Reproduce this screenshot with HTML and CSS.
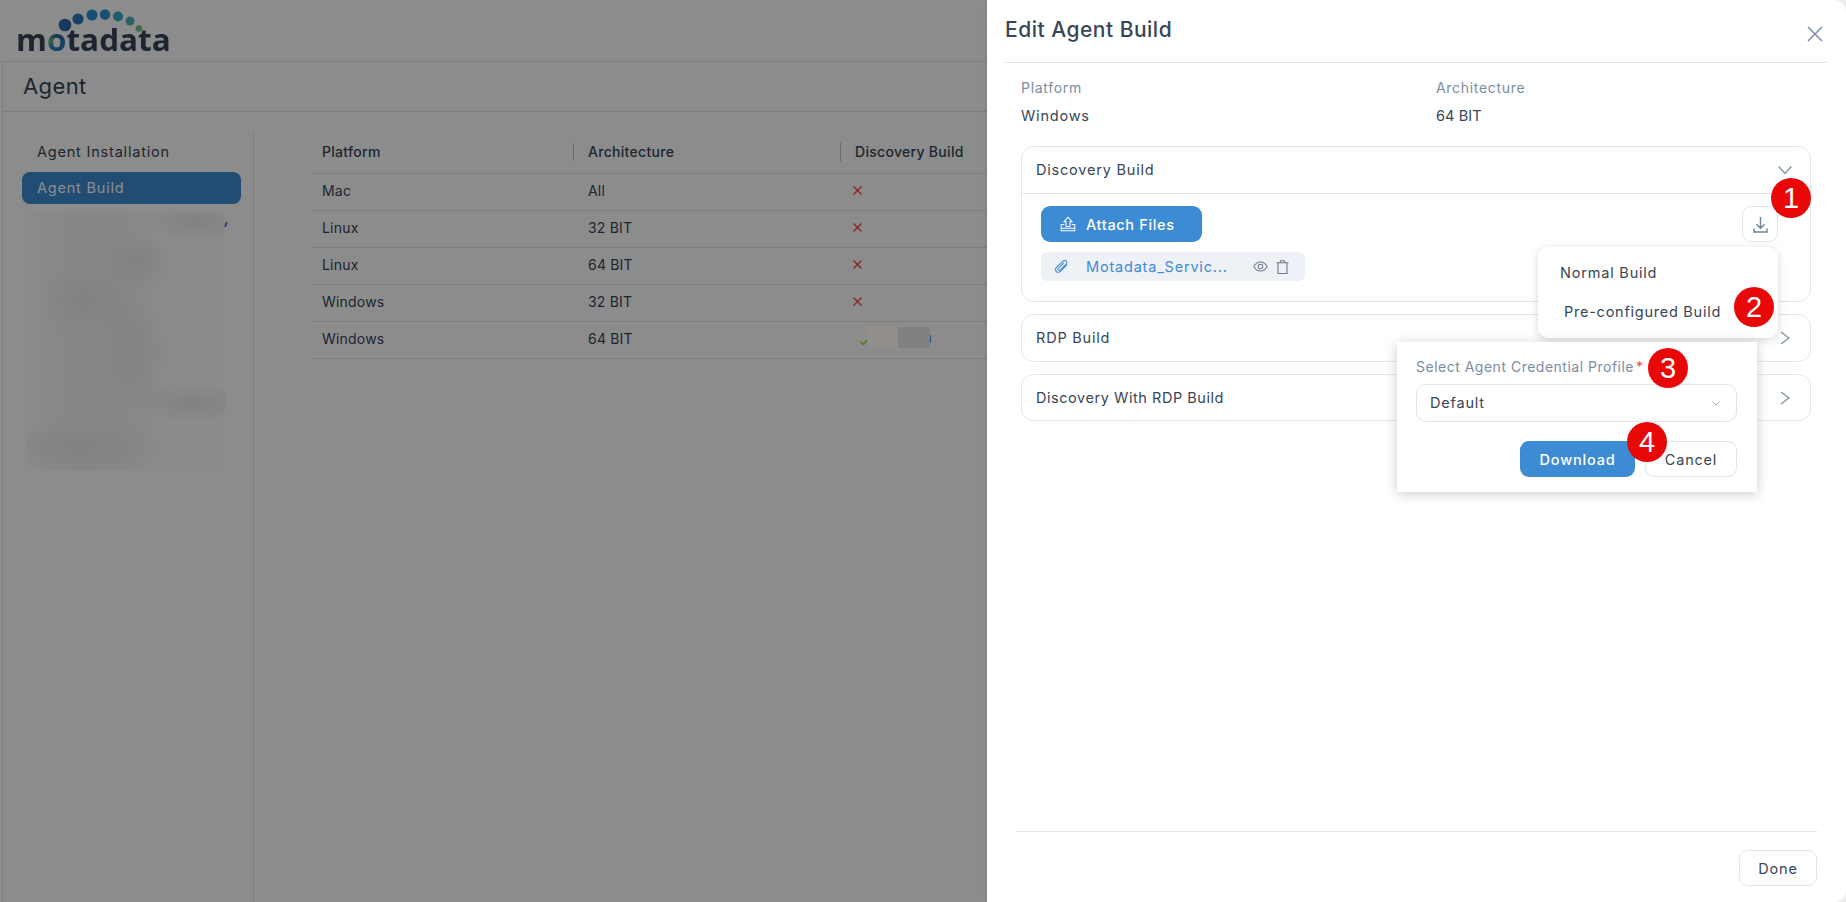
FILE: index.html
```html
<!DOCTYPE html>
<html lang="en">
<head>
<meta charset="utf-8">
<title>Edit Agent Build</title>
<link rel="stylesheet" href="styles.css">
</head>
<body>
<div class="page">
  <header class="topbar">
    <div class="logo">
      <svg class="logo-dots" width="145" height="36" viewBox="0 0 145 36">
        <circle cx="65" cy="25" r="6.3" fill="#2a66ad"/>
        <circle cx="78" cy="19" r="5.6" fill="#3276b8"/>
        <circle cx="92" cy="15" r="5.6" fill="#3190d6"/>
        <circle cx="105" cy="14.500" r="5.2" fill="#3094cf"/>
        <circle cx="118" cy="16.500" r="5" fill="#33a9c9"/>
        <circle cx="130" cy="21" r="4.500" fill="#4fb3b5"/>
        <circle cx="139" cy="28.500" r="3.300" fill="#6fc28c"/>
      </svg>
      <span class="logo-word">m<span class="logo-o">o</span>tadata</span>
    </div>
  </header>
  <div class="content">
    <div class="titlebar">Agent</div>
    <div class="main">
      <nav class="sidebar">
        <a class="nav-item">Agent Installation</a>
        <a class="nav-item active">Agent Build</a>
        <div class="nav-blur"></div>
      </nav>
      <section class="table-wrap">
        <table class="grid">
          <colgroup><col class="c1"><col class="c2"><col class="c3"><col class="c4"></colgroup>
          <thead>
            <tr><th><span>Platform</span></th><th><span class="sep">Architecture</span></th><th><span class="sep">Discovery Build</span></th><th><span class="sep">RDP Build</span></th></tr>
          </thead>
          <tbody>
            <tr><td>Mac</td><td>All</td><td class="mark"><svg class="cross" viewBox="0 0 9 9"><path d="M.5.5l8 8M8.500.5l-8 8"/></svg></td><td></td></tr>
            <tr><td>Linux</td><td>32 BIT</td><td class="mark"><svg class="cross" viewBox="0 0 9 9"><path d="M.5.5l8 8M8.500.5l-8 8"/></svg></td><td></td></tr>
            <tr><td>Linux</td><td>64 BIT</td><td class="mark"><svg class="cross" viewBox="0 0 9 9"><path d="M.5.5l8 8M8.500.5l-8 8"/></svg></td><td></td></tr>
            <tr><td>Windows</td><td>32 BIT</td><td class="mark"><svg class="cross" viewBox="0 0 9 9"><path d="M.5.5l8 8M8.500.5l-8 8"/></svg></td><td></td></tr>
            <tr><td>Windows</td><td>64 BIT</td><td class="mark ok"><svg class="check" viewBox="0 0 8 6"><path d="M.5 2.500l3 3L7.500.5"/></svg><i class="redact"></i></td><td></td></tr>
          </tbody>
        </table>
      </section>
    </div>
  </div>
</div>
<div class="overlay"></div>

<div class="drawer-frame">
<aside class="drawer">
  <div class="drawer-head">
    <h2>Edit Agent Build</h2>
    <svg class="close" viewBox="0 0 16 16"><path d="M1 1l14 14M15 1L1 15"/></svg>
  </div>
  <div class="drawer-body">
    <div class="facts">
      <div class="fact"><label>Platform</label><div>Windows</div></div>
      <div class="fact"><label>Architecture</label><div class="num">64 BIT</div></div>
    </div>
    <div class="card open">
      <div class="card-head">Discovery Build
        <svg class="chev" viewBox="0 0 14 14"><path d="M.7 3.500L7 10.500l6.300-7"/></svg>
      </div>
      <div class="card-body">
        <div class="card-left">
          <button class="btn primary attach">
            <svg class="ico" viewBox="0 0 16 16"><path d="M8 1.200L12 5.600H10V10.500H6V5.600H4zM4.300 8.500H1.200V14.800H14.800V8.500H11.700M1.200 12.300H14.800"/></svg>
            Attach Files
          </button>
          <div class="chip">
            <svg class="clip" viewBox="0 0 14 14"><path d="M13 5L6 12.300C4.800 13.500 2.600 13.600 1.500 12.500C.4 11.400 .5 9.300 1.700 8L8.400 1.400C9.400 .4 11 .4 12 1.300C13 2.200 12.900 3.800 11.900 4.800L5.400 10.800C4.800 11.300 4 11.300 3.500 10.800C3 10.300 3.100 9.500 3.600 9L9.500 3.200"/></svg>
            <span class="chip-name">Motadata_Servic...</span>
            <svg class="eye" viewBox="0 0 16 12"><path d="M.7 6C2.300 3 5 1 8 1s5.700 2 7.300 5C13.700 9 11 11 8 11S2.300 9 .7 6z"/><circle cx="8" cy="6" r="2.500"/></svg>
            <svg class="trash" viewBox="0 0 13 14"><path d="M.5 2.700h12M4 2.700L4.600.7h3.800L9 2.700M2 2.700v10.800h9V2.700"/></svg>
          </div>
        </div>
        <button class="btn icon-btn">
          <svg class="dl" viewBox="0 0 15 17"><path d="M7.500 1v11M3.500 8.200l4 4 4-4M1 12.500v3.500h13v-3.500"/></svg>
        </button>
      </div>
    </div>
    <div class="card">
      <div class="card-head">RDP Build
        <svg class="chev" viewBox="0 0 14 14"><path d="M3 1l8 6-8 6"/></svg>
      </div>
    </div>
    <div class="card short">
      <div class="card-head">Discovery With RDP Build
        <svg class="chev" viewBox="0 0 14 14"><path d="M3 1l8 6-8 6"/></svg>
      </div>
    </div>
  </div>
  <div class="drawer-foot">
    <button class="btn ghost">Done</button>
  </div>

  <div class="menu">
    <div class="menu-item">Normal Build</div>
    <div class="menu-item alt">Pre-configured Build</div>
  </div>

  <div class="popover">
    <div class="pop-label">Select Agent Credential Profile<span class="req">*</span></div>
    <div class="select"><span class="sel-text">Default</span>
      <svg class="sel-chev" viewBox="0 0 8 5"><path d="M.5.5L4 4 7.500.5"/></svg>
    </div>
    <div class="pop-actions">
      <button class="btn primary dl-btn">Download</button>
      <button class="btn ghost cancel">Cancel</button>
    </div>
  </div>

  <span class="badge b1">1</span>
  <span class="badge b2">2</span>
  <span class="badge b3">3</span>
  <span class="badge b4">4</span>
</aside>
</div>
</body>
</html>
```
FILE: styles.css
```css
* { box-sizing: border-box; }
html, body { margin: 0; height: 100%; overflow: hidden; }
body {
  font-family: Inter, "Noto Sans", "Liberation Sans", sans-serif;
  font-size: 14.500px;
  letter-spacing: .8px;
  color: #364658;
  background: #fff;
}
.page { display: flex; flex-direction: column; height: 902px; }
.topbar { height: 62px; border-bottom: 1px solid #dfe5ef; flex: none; }
.logo { position: relative; width: 175px; height: 61px; padding: 17px 0 0 16px; }
.logo-dots { position: absolute; left: 0; top: 0; }
.logo-word { display: inline-block; font-family: "Open Sans", sans-serif; font-weight: 700; font-size: 30px; letter-spacing: 0; line-height: 46px; color: #364658; position: relative; transform: scaleX(1.05); transform-origin: left center; }
.logo-o { background: conic-gradient(#1f5f9f, #2f86bd 60%, #5db583 70%, #1f5f9f); -webkit-background-clip: text; background-clip: text; color: transparent; }
.content { flex: 1; margin-left: 2px; border-left: 1px solid #dfe5ef; display: flex; flex-direction: column; min-height: 0; }
.titlebar { height: 50px; border-bottom: 1px solid #dfe5ef; padding-left: 20px; font-size: 22px; letter-spacing: .4px; line-height: 48px; flex: none; }
.main { flex: 1; display: flex; padding-top: 20px; min-height: 0; }
.sidebar { width: 251px; flex: none; border-right: 1px solid #dfe5ef; padding: 4px 12px 0 19px; display: flex; flex-direction: column; gap: 4px; }
.nav-item { display: block; height: 32px; line-height: 32px; padding-left: 15px; border-radius: 8px; }
.nav-item.active { background: #3d8bd3; color: #fff; }
.nav-blur {
  position: relative; z-index: 11;
  width: 200px; height: 258px; margin: 4px 0 0 3px;
  background:
    radial-gradient(ellipse 60px 20px at 170px 10px, #818284, transparent),
    radial-gradient(ellipse 40px 30px at 112px 50px, #818283, transparent),
    radial-gradient(ellipse 50px 36px at 62px 88px, #818283, transparent),
    radial-gradient(ellipse 40px 60px at 108px 140px, #828384, transparent),
    radial-gradient(ellipse 70px 20px at 168px 191px, #818284, transparent),
    radial-gradient(ellipse 90px 26px at 55px 235px, #818283, transparent),
    linear-gradient(90deg, #8b8b8b, #868788 20%, #868788 50%, #8b8b8b 68%);
}
.nav-blur::after { content: ""; position: absolute; left: 200px; top: 10px; width: 2px; height: 5px; background: #31456b; transform: rotate(20deg); }
.table-wrap { flex: 1; padding-left: 58px; min-width: 0; }
.grid { border-collapse: collapse; table-layout: fixed; width: 1500px; font-size: 14px; letter-spacing: .2px; }
.c1 { width: 261px; } .c2 { width: 267px; } .c3 { width: 267px; }
.grid th { height: 41px; font-weight: 500; letter-spacing: .3px; text-align: left; padding: 0 0 0 10px; border-bottom: 1px solid #dfe5ef; }
.grid th + th { padding-left: 0; }
.grid th span { display: inline-block; line-height: 18px; }
.grid th .sep { border-left: 1px solid #b9c0cc; padding-left: 14px; }
.grid td { height: 37px; padding: 0 0 2px 10px; border-bottom: 1px solid #dfe5ef; }
.grid td + td { padding-left: 15px; }
.grid td.mark { padding-left: 13px; position: relative; }
.cross { width: 9px; height: 9px; display: block; fill: none; stroke: #f0493c; stroke-width: 1.400; }
.check { width: 8px; height: 6px; display: block; fill: none; stroke: #a6e04f; stroke-width: 1.700; margin: 6px 0 0 7px; }
.redact { position: absolute; z-index: 11; left: 27px; top: 5px; width: 63px; height: 21px; background: linear-gradient(90deg, #918e8b 50%, #808183 50%); }
.redact::after { content: ""; position: absolute; left: 63px; top: 8px; width: 1px; height: 8px; background: #1e4f80; border-radius: 0 2px 2px 0; }
.overlay { position: fixed; inset: 0; z-index: 10; background: rgba(0, 0, 0, .45); }

.drawer-frame { position: fixed; z-index: 20; top: 0; right: 0; bottom: 0; width: 859px; background: #eee; box-shadow: -2px 0 5px rgba(0,0,0,.06); }
.drawer { position: relative; height: 100%; background: #fff; display: flex; flex-direction: column; padding: 0 18px; border-radius: 0 12px 12px 0; }
.drawer-head { height: 63px; flex: none; border-bottom: 1px solid #dfe5ef; display: flex; align-items: center; justify-content: space-between; }
.drawer-head h2 { margin: 0 0 2px; font-size: 21px; font-weight: 500; letter-spacing: .5px; line-height: 1.2; }
.close { width: 16px; height: 16px; margin-right: 5px; margin-top: 5px; fill: none; stroke: #7b8da3; stroke-width: 1.500; }
.drawer-body { flex: 1; padding: 0 17px 0 16px; display: flex; flex-direction: column; gap: 12px; min-height: 0; }
.facts { display: grid; grid-template-columns: 415px 1fr; padding-top: 15px; height: 71px; line-height: 20px; }
.fact label { display: block; color: #7b8da3; margin-bottom: 8px; font-size: 14px; letter-spacing: .7px; }
.num { letter-spacing: .1px; }
.card { border: 1px solid #dfe5ef; border-radius: 12px; flex: none; }
.card-head { height: 46px; padding: 0 14px 2px; display: flex; align-items: center; justify-content: space-between; }
.card.short .card-head { height: 45px; padding-bottom: 1px; letter-spacing: .55px; }
.card.open .card-head { border-bottom: 1px solid #dfe5ef; height: 47px; }
.chev { width: 14px; height: 14px; fill: none; stroke: #7b8da3; stroke-width: 1.200; margin: 2px 4px 0 0; }
.card-body { height: 107px; padding: 12px 32px 0 19px; display: flex; justify-content: space-between; align-items: flex-start; }
.card-left { display: flex; flex-direction: column; gap: 10px; align-items: flex-start; }
.btn { font: inherit; letter-spacing: inherit; border-radius: 9px; height: 36px; cursor: pointer; display: inline-flex; align-items: center; justify-content: center; padding: 0; }
.primary { background: #3d8bd3; color: #fff; border: 0; font-weight: 500; }
.attach { width: 161px; justify-content: flex-start; padding-left: 19px; gap: 10px; letter-spacing: .65px; }
.ico { width: 16px; height: 16px; fill: none; stroke: #fff; stroke-width: 1.050; }
.chip { width: 264px; height: 29px; background: #eef1f6; border-radius: 6px; display: flex; align-items: center; padding-left: 14px; }
.clip { width: 13px; height: 13px; fill: none; stroke: #3d8bd3; stroke-width: 1.100; flex: none; }
.chip-name { color: #3d8bd3; margin-left: 18px; width: 152px; flex: none; white-space: nowrap; }
.eye { width: 15px; height: 11px; fill: none; stroke: #6f7b89; stroke-width: 1.100; flex: none; margin-left: 15px; }
.trash { width: 13px; height: 14px; fill: none; stroke: #6f7b89; stroke-width: 1.100; flex: none; margin-left: 8px; }
.icon-btn { width: 36px; background: #fff; border: 1px solid #dfe5ef; }
.dl { width: 15px; height: 17px; fill: none; stroke: #6f8299; stroke-width: 1.400; }
.drawer-foot { height: 71px; flex: none; margin: 0 11px; border-top: 1px solid #dfe5ef; display: flex; justify-content: flex-end; align-items: flex-start; padding-top: 18px; }
.ghost { background: #fff; border: 1px solid #dfe5ef; color: #364658; width: 78px; }

.menu { position: absolute; left: 551px; top: 247px; width: 240px; height: 91px; background: #fff; border-radius: 10px; box-shadow: 0 2px 10px rgba(0,0,0,.16); }
.menu-item { position: absolute; left: 22px; top: 15px; line-height: 22px; white-space: nowrap; }
.menu-item.alt { left: 26px; top: 54px; letter-spacing: .75px; }

.popover { position: absolute; left: 410px; top: 342px; width: 360px; height: 150px; background: #fff; box-shadow: 0 2px 12px rgba(0,0,0,.2); padding: 15px 20px 0 19px; }
.pop-label { color: #7b8da3; font-size: 14px; letter-spacing: .5px; line-height: 20px; white-space: nowrap; }
.req { color: #f0493c; margin-left: 2px; }
.select { margin-top: 7px; height: 38px; border: 1px solid #dfe5ef; border-radius: 10px; padding: 0 14px 0 13px; display: flex; align-items: center; justify-content: space-between; }
.sel-text { margin-bottom: 2px; }
.sel-chev { width: 8px; height: 5px; fill: none; stroke: #9aa7b8; stroke-width: 1; margin-right: 2px; }
.pop-actions { display: flex; justify-content: flex-end; gap: 10px; margin-top: 19px; }
.dl-btn { width: 115px; }
.cancel { width: 92px; }

.badge { position: absolute; width: 40px; height: 40px; border-radius: 50%; background: #e80808; color: #fff; font-family: "Liberation Sans", Arial, sans-serif; font-size: 29px; letter-spacing: 0; line-height: 40px; text-align: center; }
.b1 { left: 784px; top: 178px; }
.b2 { left: 747px; top: 287px; }
.b3 { left: 661px; top: 348px; }
.b4 { left: 640px; top: 422px; }
```
